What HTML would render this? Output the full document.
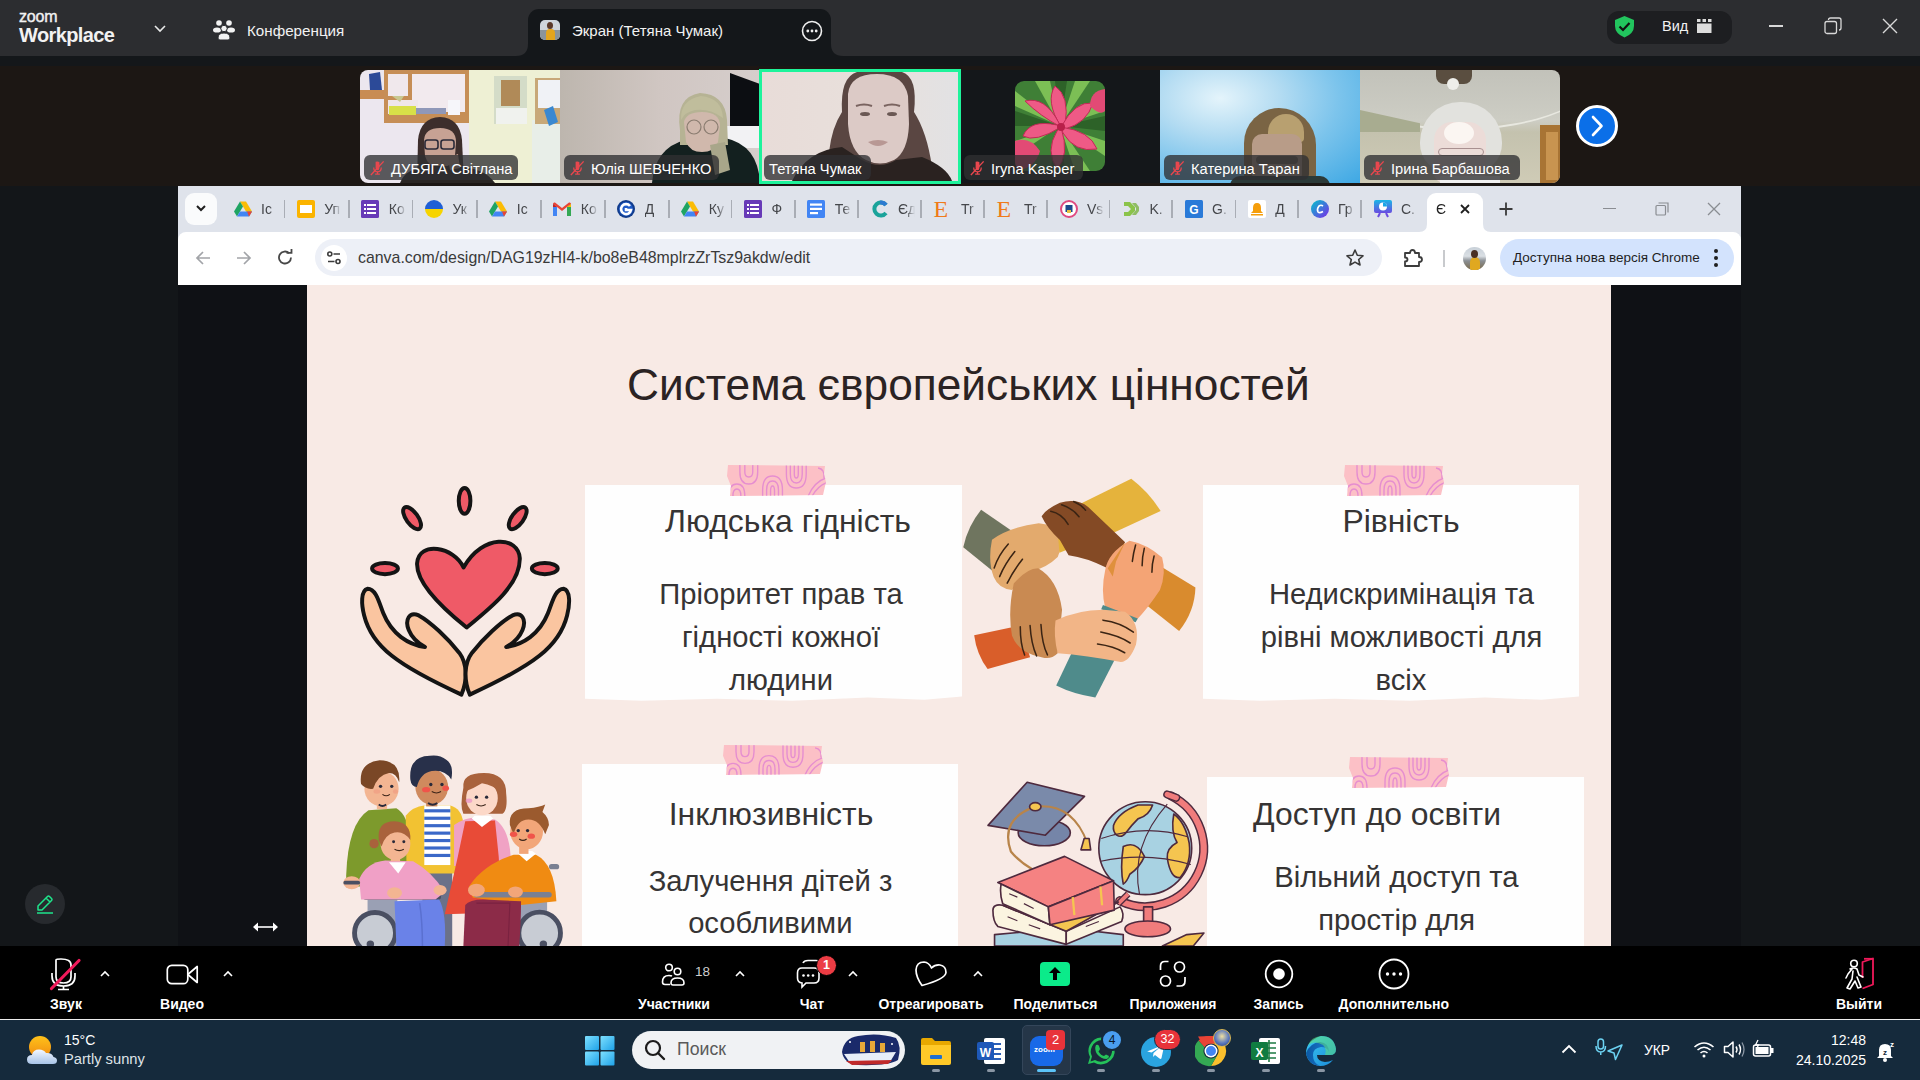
<!DOCTYPE html>
<html><head><meta charset="utf-8">
<style>
*{box-sizing:border-box;margin:0;padding:0}
html,body{width:1920px;height:1080px;overflow:hidden;background:#131619;font-family:"Liberation Sans",sans-serif;position:relative}
.a{position:absolute}
svg{display:block}
#title{left:0;top:0;width:1920px;height:56px;background:#2c2d30}
#strip{left:0;top:56px;width:1920px;height:10px;background:#14171a}
#gal{left:0;top:66px;width:1920px;height:120px;background:#1c1714}
#share{left:0;top:186px;width:1920px;height:760px;background:#131619}
#chrome{left:178px;top:186px;width:1563px;height:99px;background:#dfe3eb}
#cview{left:178px;top:285px;width:1563px;height:661px;background:#0f1115}
#slide{left:307px;top:285px;width:1304px;height:661px;background:#f8eae5;overflow:hidden}
#tb{left:0;top:946px;width:1920px;height:73px;background:#000}
#tline{left:0;top:1019px;width:1920px;height:1px;background:#ececec}
#task{left:0;top:1020px;width:1920px;height:60px;background:#152a3c}
.nm{position:absolute;height:25px;border-radius:6px;background:rgba(48,48,50,0.78);color:#fff;font-size:14.7px;line-height:28px;white-space:nowrap;overflow:hidden}
.tl{position:absolute;top:70px;height:113px;overflow:hidden}
.tt{font-size:14px;line-height:16px;color:#45474b;width:17px;overflow:hidden;white-space:nowrap;-webkit-mask-image:linear-gradient(90deg,#000 50%,transparent 100%)}
</style></head><body>
<div id="title" class="a"></div>
<div id="strip" class="a"></div>
<div id="gal" class="a"></div>
<div id="share" class="a"></div>
<div id="chrome" class="a"></div>
<div id="cview" class="a"></div>
<div id="tb" class="a"></div>
<div id="tline" class="a"></div>
<div id="task" class="a"></div>

<!-- TITLE BAR -->
<div class="a" style="left:19px;top:9px;font-size:16px;color:#f2f2f2;letter-spacing:-0.2px;line-height:1;-webkit-text-stroke:0.4px #f2f2f2">zoom</div>
<div class="a" style="left:19px;top:25px;font-size:20px;font-weight:bold;color:#f2f2f2;line-height:1;letter-spacing:-0.6px">Workplace</div>
<svg class="a" style="left:153px;top:24px" width="14" height="10" viewBox="0 0 14 10"><path d="M2 2 L7 7 L12 2" stroke="#e8e8e8" stroke-width="1.6" fill="none"/></svg>
<svg class="a" style="left:213px;top:19px" width="23" height="22" viewBox="0 0 23 22">
<circle cx="6" cy="4" r="2.8" fill="#f2f2f2"/><circle cx="16" cy="4" r="2.8" fill="#f2f2f2"/>
<ellipse cx="4" cy="11" rx="4" ry="2.6" fill="#f2f2f2"/><ellipse cx="18" cy="11" rx="4" ry="2.6" fill="#f2f2f2"/>
<circle cx="11" cy="9.5" r="3.2" fill="#f2f2f2" stroke="#2c2d30" stroke-width="1"/>
<path d="M5 19 Q5 14 11 14 Q17 14 17 19 Q17 21 15 21 L7 21 Q5 21 5 19Z" fill="#f2f2f2" stroke="#2c2d30" stroke-width="1"/>
</svg>
<div class="a" style="left:247px;top:23px;font-size:15.2px;color:#f2f2f2;line-height:1">Конференция</div>
<!-- active tab -->
<div class="a" style="left:528px;top:9px;width:303px;height:47px;background:#14171a;border-radius:11px 11px 0 0"></div>
<svg class="a" style="left:516px;top:44px" width="12" height="12"><path d="M0 12 Q12 12 12 0 L12 12Z" fill="#14171a"/></svg>
<svg class="a" style="left:831px;top:44px" width="12" height="12"><path d="M12 12 Q0 12 0 0 L0 12Z" fill="#14171a"/></svg>
<div class="a" style="left:540px;top:20px;width:20px;height:20px;border-radius:5px;overflow:hidden;background:#cfd6dc">
  <div class="a" style="left:0;top:10px;width:20px;height:10px;background:#8a949a"></div>
  <div class="a" style="left:6px;top:9px;width:9px;height:11px;border-radius:4px 4px 0 0;background:#e3a51d"></div>
  <div class="a" style="left:7px;top:2px;width:6px;height:7px;border-radius:50%;background:#5a3a2a"></div>
</div>
<div class="a" style="left:572px;top:23px;font-size:15px;color:#f2f2f2;line-height:1">Экран (Тетяна Чумак)</div>
<svg class="a" style="left:801px;top:20px" width="22" height="22" viewBox="0 0 22 22"><circle cx="11" cy="11" r="9.5" stroke="#f0f0f0" stroke-width="1.6" fill="none"/><circle cx="6.8" cy="11" r="1.4" fill="#f0f0f0"/><circle cx="11" cy="11" r="1.4" fill="#f0f0f0"/><circle cx="15.2" cy="11" r="1.4" fill="#f0f0f0"/></svg>
<!-- right -->
<div class="a" style="left:1607px;top:11px;width:125px;height:33px;background:#1d1e21;border-radius:12px"></div>
<svg class="a" style="left:1614px;top:15px" width="21" height="23" viewBox="0 0 21 23"><path d="M10.5 1 L20 5 L20 11 Q20 18.5 10.5 22.5 Q1 18.5 1 11 L1 5Z" fill="#22c55e"/><path d="M5.5 11.5 L9 15 L15.5 8" stroke="#111" stroke-width="2.2" fill="none"/></svg>
<div class="a" style="left:1662px;top:19px;font-size:14.5px;color:#f2f2f2;line-height:1">Вид</div>
<svg class="a" style="left:1697px;top:19px" width="15" height="15" viewBox="0 0 15 15"><rect x="0" y="0" width="3.5" height="3" fill="#ddd"/><rect x="5.5" y="0" width="3.5" height="3" fill="#ddd"/><rect x="11" y="0" width="3.5" height="3" fill="#ddd"/><rect x="0" y="4.5" width="14.5" height="9.5" fill="#ddd"/></svg>
<div class="a" style="left:1769px;top:25px;width:14px;height:1.5px;background:#d8d8d8"></div>
<svg class="a" style="left:1824px;top:17px" width="18" height="18" viewBox="0 0 18 18"><rect x="1" y="4.5" width="11.5" height="12" rx="2" stroke="#d8d8d8" stroke-width="1.3" fill="none"/><path d="M4.5 3 Q4.5 1 6.5 1 L15 1 Q17 1 17 3 L17 11 Q17 13 15 13" stroke="#d8d8d8" stroke-width="1.3" fill="none"/></svg>
<svg class="a" style="left:1882px;top:18px" width="16" height="16" viewBox="0 0 16 16"><path d="M1 1 L15 15 M15 1 L1 15" stroke="#d8d8d8" stroke-width="1.4"/></svg>

<!-- GALLERY -->
<svg width="0" height="0" style="position:absolute"><defs>
<symbol id="mmic" viewBox="0 0 18 16"><path d="M7 1.5 Q9.5 0.5 11 2 L11 8 Q11 10.5 9 10.5 Q7 10.5 7 8Z" fill="#e8474e"/><path d="M5 7.5 Q5 12 9 12 Q13 12 13 7.5" stroke="#e8474e" stroke-width="1.3" fill="none"/><path d="M9 12 L9 14.5 M6.5 14.5 L11.5 14.5" stroke="#e8474e" stroke-width="1.3"/><path d="M2 15.5 L15.5 1" stroke="#e8474e" stroke-width="1.5"/></symbol>
</defs></svg>
<!-- tile 1 -->
<div class="tl" style="left:360px;width:200px;border-radius:8px 0 0 8px">
<svg class="a" style="left:0;top:0;filter:blur(0.5px)" width="200" height="113" viewBox="0 0 200 113">
<rect x="0" y="0" width="110" height="113" fill="#ece7ef"/>
<rect x="109" y="0" width="91" height="113" fill="#eef0d4"/>
<rect x="172" y="50" width="28" height="63" fill="#e8eee8"/>
<rect x="0" y="20" width="27" height="9" fill="#c88c54"/>
<path d="M9 4 L20 2 L22 20 L10 20Z" fill="#2c4a98"/>
<rect x="24" y="0" width="85" height="53" fill="#c68e56"/>
<rect x="28" y="4" width="20" height="22" fill="#f0e8ec"/>
<rect x="52" y="4" width="53" height="38" fill="#f2eaee"/>
<rect x="28" y="30" width="30" height="14" fill="#efe6ea"/>
<rect x="29" y="36" width="27" height="9" fill="#d8e048"/>
<rect x="56" y="38" width="30" height="6" fill="#9098b8"/>
<rect x="88" y="30" width="12" height="15" fill="#f6f6fa"/>
<path d="M32 26 L44 26 L40 32Z" fill="#c8c890"/>
<rect x="28" y="45" width="77" height="5" fill="#c68e56"/>
<rect x="134" y="6" width="33" height="48" fill="#d4dcc8"/>
<rect x="141" y="10" width="19" height="26" fill="#b08a58"/>
<rect x="136" y="38" width="31" height="16" fill="#f0f2ee"/>
<rect x="175" y="8" width="25" height="46" fill="#c8a878"/>
<rect x="178" y="10" width="22" height="28" fill="#f0f2f6"/>
<path d="M184 40 L193 36 L198 52 L189 56Z" fill="#3a88d0"/>
<path d="M57 113 L58 70 Q60 48 80 47 Q100 48 102 70 L104 113Z" fill="#3d2e2c"/>
<path d="M64 70 Q65 58 80 58 Q96 58 96 72 L95 86 Q92 97 80 98 Q68 97 65 86Z" fill="#c7a294"/>
<g stroke="#2a2a38" stroke-width="1.6" fill="none"><rect x="65" y="70" width="13" height="9" rx="2.5"/><rect x="81" y="70" width="13" height="9" rx="2.5"/></g>
<path d="M40 113 Q45 98 70 96 L95 96 Q125 98 135 113Z" fill="#2a2624"/>
<path d="M88 88 L98 84 L100 98 L90 100Z" fill="#c7a294"/>
</svg></div>
<!-- tile 2 -->
<div class="tl" style="left:560px;width:200px">
<svg class="a" style="left:0;top:0;filter:blur(0.5px)" width="200" height="113" viewBox="0 0 200 113">
<defs><linearGradient id="t2bg" x1="0" y1="0" x2="1" y2="0"><stop offset="0" stop-color="#bdb6ae"/><stop offset="0.5" stop-color="#d0c6c2"/><stop offset="1" stop-color="#d6cecc"/></linearGradient></defs>
<rect x="0" y="0" width="200" height="113" fill="url(#t2bg)"/>
<path d="M170 3 L200 14 L200 58 L170 57Z" fill="#0c0e12"/>
<rect x="160" y="56" width="40" height="22" fill="#f2f2f4"/>
<path d="M92 113 Q95 78 125 70 L165 68 Q198 75 200 113Z" fill="#13201f"/>
<path d="M120 60 Q115 27 140 23 Q165 24 167 50 L168 75 L120 75Z" fill="#b6b394"/>
<path d="M124 52 Q126 42 142 42 Q160 42 160 56 L158 72 Q154 82 142 82 Q130 82 126 72Z" fill="#d0b8ac"/>
<path d="M121 50 Q120 30 141 26 Q162 28 163 48 Q150 38 135 40 Q125 42 121 50Z" fill="#c0bd9c"/>
<g stroke="#8a7c70" stroke-width="1.2" fill="none"><circle cx="134" cy="57" r="7"/><circle cx="151" cy="57" r="7"/></g>
<path d="M150 75 L165 72 L170 100 L155 105Z" fill="#a8a68a"/>
</svg></div>
<!-- tile 3 -->
<div class="tl" style="left:759px;top:69px;width:202px;height:115px;border:3px solid #1ef39b">
<svg class="a" style="left:0;top:0;filter:blur(0.5px)" width="196" height="109" viewBox="0 0 196 109">
<defs><linearGradient id="t3bg" x1="0" y1="0" x2="1" y2="0"><stop offset="0" stop-color="#e8dcd8"/><stop offset="0.6" stop-color="#e8e0dc"/><stop offset="1" stop-color="#e2e2e4"/></linearGradient></defs>
<rect x="0" y="0" width="196" height="109" fill="url(#t3bg)"/>
<path d="M67 80 Q70 55 80 40 Q78 5 95 0 L140 0 Q156 5 152 40 Q165 60 170 95 L130 100 L100 100Z" fill="#5a4642"/>
<path d="M86 22 Q88 2 115 2 Q142 2 146 24 L147 52 Q146 80 132 88 Q118 95 104 88 Q88 80 86 52Z" fill="#dccac6"/>
<path d="M94 34 Q102 31 110 34 M122 34 Q130 31 138 34" stroke="#7a6460" stroke-width="2" fill="none"/><ellipse cx="103" cy="42" rx="5" ry="2" fill="#6a5854"/><ellipse cx="130" cy="42" rx="5" ry="2" fill="#6a5854"/>
<path d="M106 70 Q116 66 126 70 Q116 78 106 70Z" fill="#b89894"/>
<path d="M30 109 Q45 78 80 75 L100 88 Q118 98 134 88 L160 85 Q185 95 190 109Z" fill="#2a2220"/>
</svg></div>
<!-- tile 4 -->
<div class="tl" style="left:961px;width:199px;background:#14171a">
  <svg class="a" style="left:54px;top:11px" width="90" height="90" viewBox="0 0 90 90">
  <defs><clipPath id="avc"><rect x="0" y="0" width="90" height="90" rx="9"/></clipPath></defs>
  <g clip-path="url(#avc)">
  <rect x="0" y="0" width="90" height="90" fill="#3f7f36"/>
  <g fill="#7cbf55"><path d="M45 45 L0 10 L0 25Z"/><path d="M45 45 L20 0 L35 0Z"/><path d="M45 45 L60 0 L75 0Z"/><path d="M45 45 L90 15 L90 30Z"/><path d="M45 45 L90 60 L90 75Z"/><path d="M45 45 L60 90 L75 90Z"/><path d="M45 45 L0 60 L0 75Z"/></g>
  <g fill="#2d6228"><path d="M45 45 L0 30 L0 45Z"/><path d="M45 45 L40 0 L52 0Z"/><path d="M45 45 L90 35 L90 50Z"/><path d="M45 45 L35 90 L50 90Z"/></g>
  <g fill="#ee5a86" stroke="#c02a55" stroke-width="1">
  <path d="M46 46 Q30 20 40 5 Q55 15 50 44Z"/>
  <path d="M46 46 Q60 20 78 22 Q72 42 50 48Z"/>
  <path d="M46 46 Q75 50 82 68 Q60 72 48 52Z"/>
  <path d="M46 46 Q55 75 42 88 Q30 70 42 50Z"/>
  <path d="M46 46 Q20 62 8 55 Q15 38 42 44Z"/>
  <path d="M46 46 Q25 35 10 20 Q30 15 44 42Z"/>
  </g>
  <circle cx="46" cy="46" r="4" fill="#b8204a"/>
  <path d="M0 60 Q15 55 25 70 Q20 88 0 90Z" fill="#e24a75"/>
  <path d="M90 8 Q75 10 75 25 Q85 35 90 30Z" fill="#e24a75"/>
  </g></svg>
</div>
<!-- tile 5 -->
<div class="tl" style="left:1160px;width:200px;background:radial-gradient(ellipse at 30% 25%,#e4f4fb 0,#b4dcf2 30%,#7cc4ec 60%,#3ea8e4 100%)">
  <div class="a" style="left:84px;top:38px;width:72px;height:95px;border-radius:36px 38px 8px 8px;background:#7a6444"></div>
  <div class="a" style="left:108px;top:44px;width:36px;height:28px;border-radius:18px 18px 4px 4px;background:#b8a070"></div>
  <div class="a" style="left:92px;top:64px;width:50px;height:55px;border-radius:10px 10px 16px 16px;background:#b89c88"></div>
  <div class="a" style="left:96px;top:86px;width:42px;height:8px;border-radius:4px;background:#6a5a50"></div>
  <div class="a" style="left:70px;top:106px;width:100px;height:10px;background:#2c3a38;border-radius:10px 10px 0 0"></div>
</div>
<!-- tile 6 -->
<div class="tl" style="left:1360px;width:200px;border-radius:0 8px 8px 0;background:linear-gradient(180deg,#c2c2ba 0,#cdcdc4 45%,#c4c2ae 55%,#cfcbb6 100%)">
  <div class="a" style="left:-40px;top:-60px;width:280px;height:120px;border-radius:50%;border-bottom:2px solid #e8e8e0"></div>
  <div class="a" style="left:0;top:40px;width:60px;height:22px;background:#a8ac90;clip-path:polygon(0 0,100% 60%,100% 100%,0 100%)"></div>
  <div class="a" style="left:76px;top:0;width:36px;height:14px;background:#5a4e40;border-radius:0 0 8px 8px"></div>
  <div class="a" style="left:87px;top:8px;width:12px;height:12px;border-radius:50%;background:#eeeeea"></div>
  <div class="a" style="left:180px;top:55px;width:20px;height:58px;background:#a87434"></div>
  <div class="a" style="left:186px;top:62px;width:12px;height:48px;background:#c89450"></div>
  <div class="a" style="left:60px;top:32px;width:82px;height:70px;border-radius:40px 40px 28px 28px;background:#e2e2de"></div>
  <div class="a" style="left:74px;top:52px;width:52px;height:61px;border-radius:18px 18px 10px 10px;background:#ecdcd8"></div>
  <div class="a" style="left:84px;top:52px;width:30px;height:22px;border-radius:50%;background:#fbf6f2"></div>
  <div class="a" style="left:78px;top:78px;width:46px;height:8px;border-radius:4px;border:1px solid #a89090"></div>
  <div class="a" style="left:80px;top:106px;width:60px;height:7px;background:#f0f0f0"></div>
</div>
<!-- name labels -->
<div class="nm" style="left:364px;top:155px;width:154px;padding-left:27px">ДУБЯГА Світлана<svg class="a" style="left:5px;top:5px" width="17" height="16"><use href="#mmic"/></svg></div>
<div class="nm" style="left:564px;top:155px;width:155px;padding-left:27px">Юлія ШЕВЧЕНКО<svg class="a" style="left:5px;top:5px" width="17" height="16"><use href="#mmic"/></svg></div>
<div class="nm" style="left:764px;top:155px;width:107px;padding-left:5px">Тетяна Чумак</div>
<div class="nm" style="left:964px;top:155px;width:119px;padding-left:27px">Iryna Kasper<svg class="a" style="left:5px;top:5px" width="17" height="16"><use href="#mmic"/></svg></div>
<div class="nm" style="left:1164px;top:155px;width:145px;padding-left:27px">Катерина Таран<svg class="a" style="left:5px;top:5px" width="17" height="16"><use href="#mmic"/></svg></div>
<div class="nm" style="left:1364px;top:155px;width:156px;padding-left:27px">Ірина Барбашова<svg class="a" style="left:5px;top:5px" width="17" height="16"><use href="#mmic"/></svg></div>
<!-- next btn -->
<svg class="a" style="left:1576px;top:105px" width="42" height="42" viewBox="0 0 42 42"><circle cx="21" cy="21" r="19.5" fill="#0b6fe8" stroke="#fff" stroke-width="3"/><path d="M17 12 L25.5 21 L17 30" stroke="#fff" stroke-width="2.6" fill="none" stroke-linecap="round" stroke-linejoin="round"/></svg>

<!-- CHROME -->
<div class="a" style="left:185px;top:193px;width:32px;height:32px;border-radius:9px;background:#fafbfc"></div>
<svg class="a" style="left:195px;top:203px" width="12" height="10" viewBox="0 0 12 10"><path d="M2 3 L6 7 L10 3" stroke="#1f1f1f" stroke-width="2" fill="none"/></svg>
<div class="a" style="left:233.5px;top:201px"><svg width="18" height="16" viewBox="0 0 18 16"><path d="M6 0.5 L12 0.5 L18 10.5 L15 15.5 Z" fill="#fbbc04"/><path d="M6 0.5 L0 10.5 L3 15.5 L9 5.5Z" fill="#1fa463"/><path d="M3 15.5 L15 15.5 L18 10.5 L6 10.5Z" fill="#4285f4"/><path d="M15 15.5 L18 10.5 L13 10.5Z" fill="#ea4335"/></svg></div>
<div class="a tt" style="left:261.0px;top:201px">Іс</div>
<div class="a" style="left:296.8px;top:200px"><svg width="18" height="18" viewBox="0 0 18 18"><rect x="0" y="0" width="18" height="18" rx="2" fill="#fbb400"/><rect x="3" y="5" width="12" height="8" fill="#fff"/></svg></div>
<div class="a tt" style="left:324.2px;top:201px">Уп</div>
<div class="a" style="left:361.2px;top:200px"><svg width="18" height="18" viewBox="0 0 18 18"><rect x="0" y="0" width="18" height="18" rx="1.5" fill="#673ab7"/><rect x="3" y="4" width="2" height="2" fill="#fff"/><rect x="6" y="4" width="9" height="2" fill="#fff"/><rect x="3" y="8" width="2" height="2" fill="#fff"/><rect x="6" y="8" width="9" height="2" fill="#fff"/><rect x="3" y="12" width="2" height="2" fill="#fff"/><rect x="6" y="12" width="9" height="2" fill="#fff"/></svg></div>
<div class="a tt" style="left:388.8px;top:201px">Ко</div>
<div class="a" style="left:425.0px;top:200px"><svg width="18" height="18" viewBox="0 0 18 18"><path d="M0 9 A9 9 0 0 1 18 9Z" fill="#1f5fd6"/><path d="M0 9 A9 9 0 0 0 18 9Z" fill="#f6d400"/></svg></div>
<div class="a tt" style="left:452.5px;top:201px">Ук</div>
<div class="a" style="left:489.2px;top:201px"><svg width="18" height="16" viewBox="0 0 18 16"><path d="M6 0.5 L12 0.5 L18 10.5 L15 15.5 Z" fill="#fbbc04"/><path d="M6 0.5 L0 10.5 L3 15.5 L9 5.5Z" fill="#1fa463"/><path d="M3 15.5 L15 15.5 L18 10.5 L6 10.5Z" fill="#4285f4"/><path d="M15 15.5 L18 10.5 L13 10.5Z" fill="#ea4335"/></svg></div>
<div class="a tt" style="left:516.8px;top:201px">Іс</div>
<div class="a" style="left:553.2px;top:202px"><svg width="18" height="14" viewBox="0 0 18 14"><path d="M0 2 L0 14 L4 14 L4 5Z" fill="#4285f4"/><path d="M18 2 L18 14 L14 14 L14 5Z" fill="#34a853"/><path d="M0 2 Q0 0 2 0.5 L9 6 L16 0.5 Q18 0 18 2 L14 5 L9 9 L4 5Z" fill="#ea4335"/><path d="M14 5 L18 2 L18 5Z" fill="#fbbc04"/><path d="M0 2 L4 5 L0 5Z" fill="#c5221f"/></svg></div>
<div class="a tt" style="left:580.8px;top:201px">Ко</div>
<div class="a" style="left:617.2px;top:200px"><svg width="18" height="18" viewBox="0 0 18 18"><circle cx="9" cy="9" r="9" fill="#123c8c"/><circle cx="9" cy="9" r="7" fill="#1f5bc8"/><path d="M13 6 A5 5 0 1 0 14 10 L9 10 L9 8" stroke="#fff" stroke-width="2.6" fill="none"/></svg></div>
<div class="a tt" style="left:644.8px;top:201px">Д</div>
<div class="a" style="left:681.2px;top:201px"><svg width="18" height="16" viewBox="0 0 18 16"><path d="M6 0.5 L12 0.5 L18 10.5 L15 15.5 Z" fill="#fbbc04"/><path d="M6 0.5 L0 10.5 L3 15.5 L9 5.5Z" fill="#1fa463"/><path d="M3 15.5 L15 15.5 L18 10.5 L6 10.5Z" fill="#4285f4"/><path d="M15 15.5 L18 10.5 L13 10.5Z" fill="#ea4335"/></svg></div>
<div class="a tt" style="left:708.8px;top:201px">Ку</div>
<div class="a" style="left:744.1px;top:200px"><svg width="18" height="18" viewBox="0 0 18 18"><rect x="0" y="0" width="18" height="18" rx="1.5" fill="#673ab7"/><rect x="3" y="4" width="2" height="2" fill="#fff"/><rect x="6" y="4" width="9" height="2" fill="#fff"/><rect x="3" y="8" width="2" height="2" fill="#fff"/><rect x="6" y="8" width="9" height="2" fill="#fff"/><rect x="3" y="12" width="2" height="2" fill="#fff"/><rect x="6" y="12" width="9" height="2" fill="#fff"/></svg></div>
<div class="a tt" style="left:771.6px;top:201px">Ф</div>
<div class="a" style="left:807.2px;top:200px"><svg width="18" height="18" viewBox="0 0 18 18"><rect x="0" y="0" width="18" height="18" rx="1.5" fill="#4285f4"/><rect x="3" y="3.5" width="12" height="2.2" fill="#fff"/><rect x="3" y="7.8" width="12" height="2.2" fill="#fff"/><rect x="3" y="12" width="8" height="2.2" fill="#fff"/></svg></div>
<div class="a tt" style="left:834.8px;top:201px">Те</div>
<div class="a" style="left:870.5px;top:200px"><svg width="18" height="18" viewBox="0 0 18 18"><path d="M15 5 A6.5 6.5 0 1 0 15 13" stroke="#1aa39a" stroke-width="4" fill="none"/><path d="M15 5 A6.5 6.5 0 0 0 9 2.5" stroke="#2c7ad0" stroke-width="4" fill="none"/></svg></div>
<div class="a tt" style="left:898.0px;top:201px">Єд</div>
<div class="a" style="left:933.5px;top:200px"><div style="font-family:'Liberation Serif',serif;font-size:24px;line-height:18px;color:#f07a1a;font-weight:normal">E</div></div>
<div class="a tt" style="left:961.0px;top:201px">Tr</div>
<div class="a" style="left:996.5px;top:200px"><div style="font-family:'Liberation Serif',serif;font-size:24px;line-height:18px;color:#f07a1a;font-weight:normal">E</div></div>
<div class="a tt" style="left:1024.0px;top:201px">Tr</div>
<div class="a" style="left:1059.5px;top:200px"><svg width="18" height="18" viewBox="0 0 18 18"><circle cx="9" cy="9" r="8" stroke="#e04a80" stroke-width="2" fill="#fff"/><rect x="5.5" y="5" width="7" height="7" fill="#1c4a8c"/><rect x="7" y="10" width="4" height="3" fill="#e8c040"/></svg></div>
<div class="a tt" style="left:1087.0px;top:201px">Vs</div>
<div class="a" style="left:1122.0px;top:200px"><svg width="18" height="18" viewBox="0 0 18 18"><path d="M2 2 L8 2 L13 7 L13 11 L8 16 L2 16 L2 12 L6 12 L9 9 L6 6 L2 6Z" fill="#8bc34a"/><path d="M10 3 L14 3 L17 7 L17 11 L14 15 L10 15 L14 10 L14 8Z" fill="#7cb342" opacity="0.8"/></svg></div>
<div class="a tt" style="left:1149.5px;top:201px">K.</div>
<div class="a" style="left:1184.5px;top:200px"><svg width="18" height="18" viewBox="0 0 18 18"><rect x="0" y="0" width="18" height="18" rx="1.5" fill="#2a7ad8"/><text x="9" y="13.5" font-family="Liberation Sans" font-weight="bold" font-size="12" fill="#fff" text-anchor="middle">G</text></svg></div>
<div class="a tt" style="left:1212.0px;top:201px">G.</div>
<div class="a" style="left:1247.8px;top:200px"><svg width="18" height="18" viewBox="0 0 18 18"><rect x="0" y="0" width="18" height="18" rx="2" fill="#fff"/><path d="M9 3 Q13 3 13 8 L13 11 L15 13 L3 13 L5 11 L5 8 Q5 3 9 3Z" fill="#f59e0b"/><rect x="3" y="14" width="12" height="1.5" fill="#f59e0b"/></svg></div>
<div class="a tt" style="left:1275.3px;top:201px">Д</div>
<div class="a" style="left:1310.5px;top:200px"><svg width="18" height="18" viewBox="0 0 18 18"><defs><linearGradient id="cg" x1="0" y1="0" x2="1" y2="1"><stop offset="0" stop-color="#00c4cc"/><stop offset="1" stop-color="#7d2ae8"/></linearGradient></defs><circle cx="9" cy="9" r="9" fill="url(#cg)"/><path d="M12 6 Q10 4.5 8 6 Q5.5 9 7 12 Q8.5 13.5 12 11.5" stroke="#fff" stroke-width="1.6" fill="none"/></svg></div>
<div class="a tt" style="left:1338.0px;top:201px">Гр</div>
<div class="a" style="left:1373.5px;top:200px"><svg width="18" height="18" viewBox="0 0 18 18"><defs><linearGradient id="pg" x1="0" y1="0" x2="0" y2="1"><stop offset="0" stop-color="#19b6e6"/><stop offset="1" stop-color="#6a4ce0"/></linearGradient></defs><rect x="0" y="0" width="18" height="13" rx="2" fill="url(#pg)"/><path d="M6 13 L4 17 M12 13 L14 17" stroke="#6a4ce0" stroke-width="2"/><circle cx="9" cy="6.5" r="4" fill="#fff"/><path d="M9 6.5 L9 2.5 A4 4 0 0 1 13 6.5Z" fill="#19a6e6"/></svg></div>
<div class="a tt" style="left:1401.0px;top:201px">С.</div>
<div class="a" style="left:283.50px;top:200px;width:1.5px;height:18px;background:#a9adb5"></div>
<div class="a" style="left:348.00px;top:200px;width:1.5px;height:18px;background:#a9adb5"></div>
<div class="a" style="left:411.75px;top:200px;width:1.5px;height:18px;background:#a9adb5"></div>
<div class="a" style="left:476.00px;top:200px;width:1.5px;height:18px;background:#a9adb5"></div>
<div class="a" style="left:540.00px;top:200px;width:1.5px;height:18px;background:#a9adb5"></div>
<div class="a" style="left:604.00px;top:200px;width:1.5px;height:18px;background:#a9adb5"></div>
<div class="a" style="left:668.00px;top:200px;width:1.5px;height:18px;background:#a9adb5"></div>
<div class="a" style="left:730.85px;top:200px;width:1.5px;height:18px;background:#a9adb5"></div>
<div class="a" style="left:794.00px;top:200px;width:1.5px;height:18px;background:#a9adb5"></div>
<div class="a" style="left:857.25px;top:200px;width:1.5px;height:18px;background:#a9adb5"></div>
<div class="a" style="left:920.25px;top:200px;width:1.5px;height:18px;background:#a9adb5"></div>
<div class="a" style="left:983.25px;top:200px;width:1.5px;height:18px;background:#a9adb5"></div>
<div class="a" style="left:1046.25px;top:200px;width:1.5px;height:18px;background:#a9adb5"></div>
<div class="a" style="left:1108.75px;top:200px;width:1.5px;height:18px;background:#a9adb5"></div>
<div class="a" style="left:1171.25px;top:200px;width:1.5px;height:18px;background:#a9adb5"></div>
<div class="a" style="left:1234.55px;top:200px;width:1.5px;height:18px;background:#a9adb5"></div>
<div class="a" style="left:1297.25px;top:200px;width:1.5px;height:18px;background:#a9adb5"></div>
<div class="a" style="left:1360.25px;top:200px;width:1.5px;height:18px;background:#a9adb5"></div>
<div class="a" style="left:1427px;top:193px;width:56px;height:40px;background:#fff;border-radius:9px 9px 0 0"></div>
<svg class="a" style="left:1419px;top:224px" width="8" height="8"><path d="M0 8 Q8 8 8 0 L8 8Z" fill="#fff"/></svg>
<svg class="a" style="left:1483px;top:224px" width="8" height="8"><path d="M8 8 Q0 8 0 0 L0 8Z" fill="#fff"/></svg>
<div class="a tt" style="left:1436px;top:201px;color:#1f1f1f">Є</div>
<svg class="a" style="left:1459px;top:203px" width="12" height="12" viewBox="0 0 12 12"><path d="M2 2 L10 10 M10 2 L2 10" stroke="#1f1f1f" stroke-width="1.8"/></svg>
<svg class="a" style="left:1498px;top:201px" width="16" height="16" viewBox="0 0 16 16"><path d="M8 1.5 L8 14.5 M1.5 8 L14.5 8" stroke="#3a3a3a" stroke-width="1.8"/></svg>
<div class="a" style="left:1603px;top:208px;width:13px;height:1.3px;background:#8a8d92"></div>
<svg class="a" style="left:1655px;top:202px" width="14" height="14" viewBox="0 0 14 14"><rect x="1" y="3.5" width="9.5" height="9.5" rx="1" stroke="#8a8d92" stroke-width="1.2" fill="none"/><path d="M3.5 1 L13 1 L13 10.5" stroke="#8a8d92" stroke-width="1.2" fill="none"/></svg>
<svg class="a" style="left:1707px;top:202px" width="14" height="14" viewBox="0 0 14 14"><path d="M1 1 L13 13 M13 1 L1 13" stroke="#8a8d92" stroke-width="1.3"/></svg>
<div class="a" style="left:178px;top:232px;width:1563px;height:53px;background:#fff;border-radius:8px 8px 0 0"></div>
<svg class="a" style="left:195px;top:250px" width="16" height="16" viewBox="0 0 16 16"><path d="M15 8 L2 8 M8 2 L2 8 L8 14" stroke="#a2a4a8" stroke-width="1.7" fill="none"/></svg>
<svg class="a" style="left:236px;top:250px" width="16" height="16" viewBox="0 0 16 16"><path d="M1 8 L14 8 M8 2 L14 8 L8 14" stroke="#a2a4a8" stroke-width="1.7" fill="none"/></svg>
<svg class="a" style="left:277px;top:249px" width="17" height="17" viewBox="0 0 17 17"><path d="M14 8.5 A6 6 0 1 1 12.2 4.2" stroke="#474747" stroke-width="1.8" fill="none"/><path d="M9.5 3.8 L14.5 3.8 L14.5 -1" stroke="#474747" stroke-width="1.8" fill="none"/></svg>
<div class="a" style="left:315px;top:239px;width:1067px;height:37px;border-radius:19px;background:#edf0f7"></div>
<div class="a" style="left:321px;top:245px;width:26px;height:26px;border-radius:13px;background:#fff"></div>
<svg class="a" style="left:326px;top:250px" width="16" height="16" viewBox="0 0 16 16"><circle cx="3.8" cy="4" r="2" stroke="#3c3c3c" stroke-width="1.6" fill="none"/><path d="M7.5 4 L14 4 M2 11.5 L8.5 11.5" stroke="#3c3c3c" stroke-width="1.6"/><circle cx="12" cy="11.5" r="2" stroke="#3c3c3c" stroke-width="1.6" fill="none"/></svg>
<div class="a" style="left:358px;top:249px;font-size:15.9px;line-height:18px;color:#3a3a3a;white-space:nowrap">canva.com/design/DAG19zHI4-k/bo8eB48mplrzZrTsz9akdw/edit</div>
<svg class="a" style="left:1345px;top:248px" width="20" height="20" viewBox="0 0 20 20"><path d="M10 2 L12.3 7.3 L18 7.8 L13.7 11.5 L15 17 L10 14.1 L5 17 L6.3 11.5 L2 7.8 L7.7 7.3Z" stroke="#3c3c3c" stroke-width="1.6" fill="none" stroke-linejoin="round"/></svg>
<svg class="a" style="left:1403px;top:248px" width="21" height="20" viewBox="0 0 21 20"><path d="M2 5 L7 5 Q7 2 9.5 2 Q12 2 12 5 L16 5 L16 9 Q19 9 19 11.5 Q19 14 16 14 L16 18 L2 18 L2 13.5 Q4.5 13.5 4.5 11.5 Q4.5 9.5 2 9.5Z" stroke="#3c3c3c" stroke-width="1.8" fill="none" stroke-linejoin="round"/></svg>
<div class="a" style="left:1443px;top:250px;width:1.5px;height:17px;background:#c8cacd"></div>
<div class="a" style="left:1463px;top:247px;width:23px;height:23px;border-radius:50%;overflow:hidden;background:linear-gradient(180deg,#c8d0d8 0,#dadfe4 40%,#8a8f94 60%,#7a6a4a 100%)"><div class="a" style="left:7px;top:10px;width:10px;height:13px;border-radius:5px 5px 0 0;background:#e0a820"></div><div class="a" style="left:8px;top:3px;width:7px;height:8px;border-radius:50%;background:#4a3024"></div></div>
<div class="a" style="left:1500px;top:239px;width:234px;height:38px;border-radius:19px;background:#d3e3fd"></div>
<div class="a" style="left:1513px;top:250px;font-size:13.5px;line-height:16px;color:#1f1f1f;white-space:nowrap">Доступна нова версія Chrome</div>
<svg class="a" style="left:1712px;top:248px" width="8" height="20" viewBox="0 0 8 20"><circle cx="4" cy="3" r="2" fill="#1f1f1f"/><circle cx="4" cy="10" r="2" fill="#1f1f1f"/><circle cx="4" cy="17" r="2" fill="#1f1f1f"/></svg>
<!-- SLIDE -->
<div class="a" style="left:307px;top:285px;width:1304px;height:661px;overflow:hidden;background:#f8eae5"><div class="a" style="left:-307px;top:-285px;width:1920px;height:1080px">
<div class="a" style="left:618.3px;top:362.55px;width:700px;text-align:center;font-size:44.25px;line-height:1;color:#2b2323;white-space:nowrap;">Система європейських цінностей</div>
<div class="a" style="left:585px;top:485px;width:377px;height:218px;background:#fefefe;clip-path:polygon(0 0,100% 0,100% 97%,90% 98.5%,75% 97.5%,55% 99%,35% 98%,15% 99%,0 98%)"></div>
<div class="a" style="left:1203px;top:485px;width:376px;height:218px;background:#fefefe;clip-path:polygon(0 0,100% 0,100% 97%,90% 98.5%,75% 97.5%,55% 99%,35% 98%,15% 99%,0 98%)"></div>
<div class="a" style="left:582px;top:764px;width:376px;height:200px;background:#fefefe;clip-path:polygon(0 0,100% 0,100% 97%,90% 98.5%,75% 97.5%,55% 99%,35% 98%,15% 99%,0 98%)"></div>
<div class="a" style="left:1207px;top:777px;width:377px;height:200px;background:#fefefe;clip-path:polygon(0 0,100% 0,100% 97%,90% 98.5%,75% 97.5%,55% 99%,35% 98%,15% 99%,0 98%)"></div>
<svg class="a" style="left:727px;top:464px" width="99" height="32" viewBox="0 0 100 32" preserveAspectRatio="none"><defs><clipPath id="tp1"><path d="M1 1 L99 2 L98 10 L100 18 L97 31 L3 32 L4 22 L0 12Z"/></clipPath></defs><path d="M1 1 L99 2 L98 10 L100 18 L97 31 L3 32 L4 22 L0 12Z" fill="#fcc0c6"/><g stroke="#e68ed0" stroke-width="1.4" fill="none" clip-path="url(#tp1)"><path d="M2 32 Q2 20 10 20 Q18 20 18 32"/><path d="M6 32 Q6 25 10 25 Q14 25 14 32"/><path d="M13 0 L13 8 Q13 20 22 20 Q31 20 31 8 L31 0"/><path d="M18 0 L18 8 Q18 13 22 13 Q26 13 26 8 L26 0"/><path d="M36 32 L36 26 Q36 12 46 12 Q56 12 56 26 L56 32"/><path d="M40 32 L40 26 Q40 17 46 17 Q52 17 52 26 L52 32"/><path d="M44 32 L44 27 Q44 22 46 22 Q48 22 48 27 L48 32"/><path d="M60 0 L60 10 Q60 24 70 24 Q80 24 80 10 L80 0"/><path d="M64 0 L64 10 Q64 19 70 19 Q76 19 76 10 L76 0"/><path d="M68 0 L68 10 Q68 14 70 14 Q72 14 72 10 L72 0"/><path d="M82 32 Q88 18 100 14"/><path d="M86 32 Q92 22 100 19"/><path d="M92 4 Q99 5 98 14"/></g></svg>
<svg class="a" style="left:1344px;top:464px" width="100" height="32" viewBox="0 0 100 32" preserveAspectRatio="none"><defs><clipPath id="tp2"><path d="M1 1 L99 2 L98 10 L100 18 L97 31 L3 32 L4 22 L0 12Z"/></clipPath></defs><path d="M1 1 L99 2 L98 10 L100 18 L97 31 L3 32 L4 22 L0 12Z" fill="#fcc0c6"/><g stroke="#e68ed0" stroke-width="1.4" fill="none" clip-path="url(#tp2)"><path d="M2 32 Q2 20 10 20 Q18 20 18 32"/><path d="M6 32 Q6 25 10 25 Q14 25 14 32"/><path d="M13 0 L13 8 Q13 20 22 20 Q31 20 31 8 L31 0"/><path d="M18 0 L18 8 Q18 13 22 13 Q26 13 26 8 L26 0"/><path d="M36 32 L36 26 Q36 12 46 12 Q56 12 56 26 L56 32"/><path d="M40 32 L40 26 Q40 17 46 17 Q52 17 52 26 L52 32"/><path d="M44 32 L44 27 Q44 22 46 22 Q48 22 48 27 L48 32"/><path d="M60 0 L60 10 Q60 24 70 24 Q80 24 80 10 L80 0"/><path d="M64 0 L64 10 Q64 19 70 19 Q76 19 76 10 L76 0"/><path d="M68 0 L68 10 Q68 14 70 14 Q72 14 72 10 L72 0"/><path d="M82 32 Q88 18 100 14"/><path d="M86 32 Q92 22 100 19"/><path d="M92 4 Q99 5 98 14"/></g></svg>
<svg class="a" style="left:723px;top:744px" width="100" height="31" viewBox="0 0 100 32" preserveAspectRatio="none"><defs><clipPath id="tp3"><path d="M1 1 L99 2 L98 10 L100 18 L97 31 L3 32 L4 22 L0 12Z"/></clipPath></defs><path d="M1 1 L99 2 L98 10 L100 18 L97 31 L3 32 L4 22 L0 12Z" fill="#fcc0c6"/><g stroke="#e68ed0" stroke-width="1.4" fill="none" clip-path="url(#tp3)"><path d="M2 32 Q2 20 10 20 Q18 20 18 32"/><path d="M6 32 Q6 25 10 25 Q14 25 14 32"/><path d="M13 0 L13 8 Q13 20 22 20 Q31 20 31 8 L31 0"/><path d="M18 0 L18 8 Q18 13 22 13 Q26 13 26 8 L26 0"/><path d="M36 32 L36 26 Q36 12 46 12 Q56 12 56 26 L56 32"/><path d="M40 32 L40 26 Q40 17 46 17 Q52 17 52 26 L52 32"/><path d="M44 32 L44 27 Q44 22 46 22 Q48 22 48 27 L48 32"/><path d="M60 0 L60 10 Q60 24 70 24 Q80 24 80 10 L80 0"/><path d="M64 0 L64 10 Q64 19 70 19 Q76 19 76 10 L76 0"/><path d="M68 0 L68 10 Q68 14 70 14 Q72 14 72 10 L72 0"/><path d="M82 32 Q88 18 100 14"/><path d="M86 32 Q92 22 100 19"/><path d="M92 4 Q99 5 98 14"/></g></svg>
<svg class="a" style="left:1349px;top:756px" width="100" height="32" viewBox="0 0 100 32" preserveAspectRatio="none"><defs><clipPath id="tp4"><path d="M1 1 L99 2 L98 10 L100 18 L97 31 L3 32 L4 22 L0 12Z"/></clipPath></defs><path d="M1 1 L99 2 L98 10 L100 18 L97 31 L3 32 L4 22 L0 12Z" fill="#fcc0c6"/><g stroke="#e68ed0" stroke-width="1.4" fill="none" clip-path="url(#tp4)"><path d="M2 32 Q2 20 10 20 Q18 20 18 32"/><path d="M6 32 Q6 25 10 25 Q14 25 14 32"/><path d="M13 0 L13 8 Q13 20 22 20 Q31 20 31 8 L31 0"/><path d="M18 0 L18 8 Q18 13 22 13 Q26 13 26 8 L26 0"/><path d="M36 32 L36 26 Q36 12 46 12 Q56 12 56 26 L56 32"/><path d="M40 32 L40 26 Q40 17 46 17 Q52 17 52 26 L52 32"/><path d="M44 32 L44 27 Q44 22 46 22 Q48 22 48 27 L48 32"/><path d="M60 0 L60 10 Q60 24 70 24 Q80 24 80 10 L80 0"/><path d="M64 0 L64 10 Q64 19 70 19 Q76 19 76 10 L76 0"/><path d="M68 0 L68 10 Q68 14 70 14 Q72 14 72 10 L72 0"/><path d="M82 32 Q88 18 100 14"/><path d="M86 32 Q92 22 100 19"/><path d="M92 4 Q99 5 98 14"/></g></svg>
<div class="a" style="left:438.0px;top:505.50px;width:700px;text-align:center;font-size:31.9px;line-height:1;color:#363434;white-space:nowrap;">Людська гідність</div>
<div class="a" style="left:431.0px;top:579.59px;width:700px;text-align:center;font-size:29.2px;line-height:1;color:#363434;white-space:nowrap;">Пріоритет прав та</div>
<div class="a" style="left:431.0px;top:622.79px;width:700px;text-align:center;font-size:29.2px;line-height:1;color:#363434;white-space:nowrap;">гідності кожної</div>
<div class="a" style="left:431.0px;top:666.29px;width:700px;text-align:center;font-size:29.2px;line-height:1;color:#363434;white-space:nowrap;">людини</div>
<div class="a" style="left:1051.0px;top:505.50px;width:700px;text-align:center;font-size:31.9px;line-height:1;color:#363434;white-space:nowrap;">Рівність</div>
<div class="a" style="left:1051.5px;top:579.59px;width:700px;text-align:center;font-size:29.2px;line-height:1;color:#363434;white-space:nowrap;">Недискримінація та</div>
<div class="a" style="left:1051.5px;top:622.79px;width:700px;text-align:center;font-size:29.2px;line-height:1;color:#363434;white-space:nowrap;">рівні можливості для</div>
<div class="a" style="left:1051.0px;top:666.29px;width:700px;text-align:center;font-size:29.2px;line-height:1;color:#363434;white-space:nowrap;">всіх</div>
<div class="a" style="left:421.0px;top:799.00px;width:700px;text-align:center;font-size:31.9px;line-height:1;color:#363434;white-space:nowrap;">Інклюзивність</div>
<div class="a" style="left:420.5px;top:866.79px;width:700px;text-align:center;font-size:29.2px;line-height:1;color:#363434;white-space:nowrap;">Залучення дітей з</div>
<div class="a" style="left:420.3px;top:909.29px;width:700px;text-align:center;font-size:29.2px;line-height:1;color:#363434;white-space:nowrap;">особливими</div>
<div class="a" style="left:1027.0px;top:799.00px;width:700px;text-align:center;font-size:31.9px;line-height:1;color:#363434;white-space:nowrap;">Доступ до освіти</div>
<div class="a" style="left:1046.4px;top:863.09px;width:700px;text-align:center;font-size:29.2px;line-height:1;color:#363434;white-space:nowrap;">Вільний доступ та</div>
<div class="a" style="left:1046.7px;top:906.09px;width:700px;text-align:center;font-size:29.2px;line-height:1;color:#363434;white-space:nowrap;">простір для</div>
<svg class="a" style="left:350px;top:480px" width="230" height="225" viewBox="0 0 1104 1080">
<g stroke="#141414" stroke-width="19" stroke-linejoin="round">
<path d="M545 420 C 500 320, 330 290, 322 400 C 318 500, 450 620, 560 708 C 680 610, 818 500, 815 375 C 808 270, 640 255, 545 420 Z" fill="#ef5a67"/>
<ellipse cx="550" cy="100" rx="28" ry="62" fill="#ef5a67"/>
<ellipse cx="298" cy="183" rx="28" ry="62" fill="#ef5a67" transform="rotate(-36 298 183)"/>
<ellipse cx="805" cy="183" rx="28" ry="62" fill="#ef5a67" transform="rotate(36 805 183)"/>
<ellipse cx="168" cy="425" rx="62" ry="27" fill="#ef5a67"/>
<ellipse cx="935" cy="425" rx="62" ry="27" fill="#ef5a67"/>
<path d="M 85 522 C 50 530, 55 600, 68 650 C 105 800, 230 890, 535 1030 C 565 960, 562 880, 525 830 C 470 760, 385 680, 330 650 C 285 630, 262 670, 282 720 C 298 760, 330 785, 360 802 C 280 790, 200 740, 160 640 C 140 590, 125 522, 85 522 Z" fill="#fac5a0"/>
<path d="M 85 522 C 50 530, 55 600, 68 650 C 105 800, 230 890, 535 1030 C 565 960, 562 880, 525 830 C 470 760, 385 680, 330 650 C 285 630, 262 670, 282 720 C 298 760, 330 785, 360 802 C 280 790, 200 740, 160 640 C 140 590, 125 522, 85 522 Z" fill="#fac5a0" transform="translate(1110 0) scale(-1 1)"/>
</g></svg>
<svg class="a" style="left:955px;top:470px" width="250" height="235" viewBox="0 0 1149 1080">
<path d="M 810 40 Q 890 100 945 188 L 520 385 L 455 215 Z" fill="#e5b33c"/>
<path d="M 760 330 L 1105 540 Q 1102 650 1030 740 L 690 470 Z" fill="#d98b2e"/>
<path d="M 560 790 L 745 850 L 645 1045 Q 545 1030 465 990 Z" fill="#4f8b8b"/>
<path d="M 88 760 L 300 715 L 345 860 L 150 915 Q 100 850 88 760 Z" fill="#d95e2a"/>
<path d="M 120 183 L 262 280 L 180 470 L 38 355 Q 58 260 120 183 Z" fill="#6f755f"/>
<path d="M 170 320 Q 250 262 385 245 L 470 258 Q 505 330 472 400 Q 420 452 340 470 L 262 552 Q 200 545 178 492 Q 150 420 170 320 Z" fill="#e3aa6d"/>
<path d="M 470 258 L 555 350 L 480 380 Z" fill="#e5b33c"/>
<path d="M 398 212 Q 420 178 482 150 Q 562 128 612 170 L 782 332 L 702 452 Q 602 402 522 392 L 482 322 Q 420 262 398 212 Z" fill="#844a25"/>
<path d="M 690 462 Q 702 380 802 325 Q 882 340 952 402 Q 972 472 942 552 Q 882 642 832 692 L 690 632 Q 670 552 690 462 Z" fill="#f4a475"/>
<path d="M 702 452 L 782 332 L 740 420 L 725 490 Z" fill="#d98b2e" opacity="0.8"/>
<path d="M 270 522 Q 330 452 382 452 Q 472 502 492 642 L 472 842 Q 442 872 402 862 Q 292 842 262 762 Q 242 652 270 522 Z" fill="#c98a52"/>
<path d="M 680 620 L 840 682 L 830 700 L 672 640 Z" fill="#4f8b8b"/>
<path d="M 462 692 Q 562 642 682 642 L 782 652 Q 852 702 832 802 Q 802 882 762 882 Q 602 852 472 842 Q 452 762 462 692 Z" fill="#f2b587"/>
<g stroke="#3a2414" stroke-width="7" fill="none" stroke-linecap="round">
<path d="M245 340 Q200 390 180 450"/><path d="M275 375 Q230 430 205 490"/><path d="M310 410 Q270 460 240 520"/>
<path d="M440 190 Q490 200 520 250"/><path d="M490 160 Q540 175 570 215"/><path d="M545 145 Q580 160 600 185"/>
<path d="M830 345 Q820 380 815 420"/><path d="M870 360 Q860 400 860 440"/><path d="M915 395 Q905 430 905 470"/>
<path d="M300 720 Q300 800 320 850"/><path d="M345 715 Q350 800 375 855"/><path d="M395 710 Q400 800 425 850"/>
<path d="M680 690 Q760 700 820 745"/><path d="M670 745 Q750 760 805 795"/><path d="M655 800 Q730 810 780 840"/>
</g></svg>
<svg class="a" style="left:335px;top:745px" width="240" height="201" viewBox="0 0 1290 1080">
<!-- kid1 green -->
<path d="M60 700 Q70 420 180 350 L330 340 Q400 380 400 520 L390 760 L60 760Z" fill="#7d9a2c"/>
<ellipse cx="250" cy="235" rx="92" ry="95" fill="#f3b592"/>
<path d="M140 210 Q125 95 240 82 Q355 85 345 200 Q330 150 290 150 Q230 160 205 235 Q165 240 140 210Z" fill="#7a4726"/>
<path d="M225 300 L280 300 L280 345 L225 345Z" fill="#f3b592"/>
<path d="M235 320 Q255 335 275 320" stroke="#2a2a3a" stroke-width="10" fill="none"/>
<circle cx="245" cy="222" r="9" fill="#2a2a3a"/><circle cx="305" cy="222" r="9" fill="#2a2a3a"/>
<path d="M255 265 Q275 280 295 265" stroke="#3a2418" stroke-width="6" fill="none"/>
<ellipse cx="225" cy="250" rx="18" ry="12" fill="#f09a80" opacity="0.6"/><ellipse cx="325" cy="250" rx="14" ry="12" fill="#f09a80" opacity="0.6"/>
<!-- kid2 striped -->
<rect x="470" y="630" width="160" height="450" fill="#6b7189"/>
<path d="M380 380 Q420 330 480 325 L620 325 Q680 340 690 420 L680 690 L385 690Z" fill="#f2c232"/>
<rect x="480" y="325" width="140" height="320" fill="#fff"/>
<g fill="#3a68c8"><rect x="480" y="345" width="140" height="17"/><rect x="480" y="385" width="140" height="17"/><rect x="480" y="425" width="140" height="17"/><rect x="480" y="465" width="140" height="17"/><rect x="480" y="505" width="140" height="17"/><rect x="480" y="545" width="140" height="17"/><rect x="480" y="585" width="140" height="17"/></g>
<ellipse cx="520" cy="225" rx="88" ry="95" fill="#cf8a5e"/>
<rect x="490" y="290" width="60" height="40" fill="#cf8a5e"/>
<path d="M500 312 Q525 330 550 312" stroke="#2a2a3a" stroke-width="10" fill="none"/>
<path d="M405 185 Q395 60 510 58 Q560 50 600 80 Q640 110 625 185 Q590 130 520 140 Q460 150 440 225 Q410 225 405 185Z" fill="#28304a"/>
<circle cx="515" cy="212" r="9" fill="#2a2a3a"/><circle cx="575" cy="212" r="9" fill="#2a2a3a"/>
<path d="M520 250 Q545 265 570 250" stroke="#3a2418" stroke-width="6" fill="none"/>
<ellipse cx="490" cy="240" rx="22" ry="14" fill="#f0544a"/><ellipse cx="595" cy="232" rx="18" ry="14" fill="#f0544a"/>
<!-- kid3 girl red dress -->
<path d="M640 430 Q700 390 760 390 L860 400 Q940 450 945 620 L880 640 L640 650Z" fill="#f0a2c4"/>
<path d="M700 410 L860 405 L880 600 L895 900 L590 910 L660 600Z" fill="#e84b37"/>
<path d="M735 395 L790 440 L850 395 L835 380 L750 380Z" fill="#fff"/>
<path d="M690 230 Q680 150 800 150 Q920 150 920 260 Q930 350 900 370 L690 370 Q670 330 690 230Z" fill="#a9623c"/>
<ellipse cx="790" cy="285" rx="85" ry="92" fill="#fcd8c8"/>
<path d="M700 250 Q705 165 800 162 Q885 168 895 255 Q850 215 790 205 Q740 235 700 250Z" fill="#a9623c"/>
<circle cx="760" cy="280" r="9" fill="#2a2a3a"/><circle cx="815" cy="280" r="9" fill="#2a2a3a"/>
<path d="M760 320 Q785 335 810 320" stroke="#3a2418" stroke-width="6" fill="none"/>
<ellipse cx="720" cy="300" rx="18" ry="12" fill="#e890c8" opacity="0.7"/>
<!-- kid5 girl wheelchair left -->
<rect x="175" y="830" width="160" height="250" fill="#9aa0b4"/>
<circle cx="215" cy="1010" r="110" fill="#c8ccd4" stroke="#4a4f62" stroke-width="26"/>
<circle cx="190" cy="1070" r="20" fill="#4a4f62"/>
<rect x="150" y="800" width="420" height="32" rx="16" fill="#4a4f62"/>
<path d="M130 720 Q170 630 270 620 L420 625 Q520 680 590 790 L540 830 L140 830Z" fill="#f0a0c6"/>
<path d="M290 630 L340 690 L380 630Z" fill="#fff"/>
<path d="M320 840 L560 830 Q600 900 590 1080 L330 1080Z" fill="#6a82e8"/>
<path d="M455 850 Q470 950 470 1080" stroke="#5a70d0" stroke-width="8" fill="none"/>
<ellipse cx="325" cy="530" rx="80" ry="88" fill="#f3b592"/>
<path d="M235 510 Q225 410 320 410 Q410 415 405 510 Q370 460 320 470 Q270 480 250 545Z" fill="#a9623c"/>
<circle cx="210" cy="530" r="25" fill="#a9623c"/>
<circle cx="315" cy="520" r="8" fill="#2a2a3a"/><circle cx="370" cy="520" r="8" fill="#2a2a3a"/>
<path d="M320 560 Q345 575 370 560" stroke="#3a2418" stroke-width="6" fill="none"/>
<rect x="300" y="600" width="50" height="25" fill="#f3b592"/>
<ellipse cx="320" cy="795" rx="40" ry="30" fill="#f3b592"/>
<ellipse cx="565" cy="780" rx="35" ry="28" fill="#f3b592"/>
<!-- kid4 boy wheelchair right -->
<rect x="960" y="820" width="180" height="260" fill="#9aa0b4"/>
<circle cx="1100" cy="1010" r="112" fill="#c8ccd4" stroke="#4a4f62" stroke-width="26"/>
<circle cx="1120" cy="1070" r="20" fill="#4a4f62"/>
<rect x="1150" y="640" width="55" height="28" rx="14" fill="#7a8092"/>
<path d="M720 760 Q800 640 960 590 L1080 590 Q1180 640 1190 840 L1000 860 L740 820Z" fill="#f08b12"/>
<path d="M985 585 L1030 625 L1080 585 L1060 570 L1000 570Z" fill="#fff"/>
<rect x="745" y="790" width="420" height="30" rx="15" fill="#7a8092"/>
<path d="M700 860 Q720 830 800 830 L1000 840 Q1000 950 990 1080 L690 1080Z" fill="#8c2b48"/>
<path d="M760 850 L940 850 L930 1080" stroke="#7a2240" stroke-width="6" fill="none"/>
<ellipse cx="1030" cy="465" rx="88" ry="95" fill="#f2a679"/>
<path d="M940 430 Q930 340 1040 340 Q1100 335 1130 320 L1115 360 Q1150 390 1150 430 L1130 480 Q1100 400 1040 400 Q980 400 960 480Z" fill="#9b5a2e"/>
<circle cx="985" cy="460" r="9" fill="#2a2a3a"/><circle cx="1035" cy="460" r="9" fill="#2a2a3a"/>
<path d="M990 505 Q1010 520 1030 505" stroke="#3a2418" stroke-width="6" fill="none"/>
<ellipse cx="960" cy="480" rx="20" ry="14" fill="#f0544a"/><ellipse cx="1055" cy="490" rx="20" ry="14" fill="#f0544a"/>
<rect x="990" y="545" width="50" height="40" fill="#f2a679"/>
<ellipse cx="90" cy="740" rx="45" ry="35" fill="#f3b592"/>
<rect x="45" y="730" width="90" height="20" rx="10" fill="#4a4f62"/>
<ellipse cx="760" cy="780" rx="45" ry="35" fill="#f2a679"/>
<ellipse cx="970" cy="790" rx="40" ry="30" fill="#f2a679"/>
</svg>
<svg class="a" style="left:975px;top:770px" width="240" height="176" viewBox="0 0 1473 1080">
<g stroke="#4e2a3e" stroke-width="10" stroke-linejoin="round">
<path d="M1202 158 A358 358 0 0 1 888 802" stroke="#4e2a3e" stroke-width="56" fill="none" stroke-linecap="round"/>
<path d="M1202 158 A358 358 0 0 1 888 802" stroke="#f07c7c" stroke-width="38" fill="none" stroke-linecap="round"/>
<path d="M1180 150 L1235 170" stroke="#4e2a3e" stroke-width="50" stroke-linecap="round"/>
<path d="M1180 150 L1235 170" stroke="#f07c7c" stroke-width="32" stroke-linecap="round"/>
<rect x="1035" y="840" width="55" height="120" fill="#f07c7c"/>
<ellipse cx="1060" cy="975" rx="140" ry="48" fill="#f07c7c"/>
<path d="M880 820 L940 760" stroke="#4e2a3e" stroke-width="40"/>
<path d="M880 820 L940 760" stroke="#f07c7c" stroke-width="24"/>
<circle cx="1045" cy="480" r="285" fill="#a8d2e2"/>
<path d="M850 340 Q880 260 1000 215 L1090 215 Q1070 280 1000 300 Q960 340 930 380 Q900 420 870 400 Q845 380 850 340Z" fill="#f5c550"/>
<path d="M910 470 Q990 430 1040 530 Q1010 600 950 640 Q930 690 910 700 Q890 600 910 470Z" fill="#f5c550"/>
<path d="M1220 270 Q1290 320 1315 450 Q1330 570 1260 660 Q1200 670 1180 540 Q1175 480 1240 445 Q1200 380 1220 270Z" fill="#f5c550"/>
<g fill="none" stroke-width="7"><path d="M775 420 Q1050 330 1305 410"/><path d="M772 560 Q1050 500 1325 580"/><path d="M1180 210 Q950 470 1010 765"/></g>
<!-- cap -->
<ellipse cx="425" cy="385" rx="160" ry="80" fill="#7585a8"/>
<path d="M80 340 L320 75 L672 162 L432 400 Z" fill="#7a8aaa"/>
<path d="M370 225 Q600 200 690 450" fill="none" stroke="#b8844a" stroke-width="12"/>
<path d="M370 225 Q150 300 220 500 Q300 600 480 670" fill="none" stroke="#b8844a" stroke-width="14"/>
<ellipse cx="370" cy="225" rx="35" ry="25" fill="#f5c550"/>
<path d="M670 420 L700 420 L710 490 L650 490Z" fill="#f5c550"/>
<!-- books -->
<path d="M120 1010 L560 970 L910 1010 L910 1080 L120 1080Z" fill="#a8d2e2"/>
<path d="M110 860 Q110 820 170 830 L560 990 L560 1070 L140 960 Q110 930 110 860Z" fill="#fbf4e0"/>
<path d="M560 990 L890 840 Q920 880 900 930 L560 1070Z" fill="#fbf4e0"/>
<path d="M170 830 L880 810 L560 990 Z" fill="#f5c550"/>
<path d="M140 690 L550 530 L850 680 L450 840Z" fill="#f58282"/>
<path d="M160 700 L450 840 L460 950 L170 820 Q150 760 160 700Z" fill="#fbf4e0"/>
<path d="M450 840 L850 680 L855 860 L460 950Z" fill="#f58282"/>
<path d="M600 780 L610 890 M770 715 L780 830" stroke="#f5c550" stroke-width="14"/>
<g stroke-width="7"><path d="M210 760 L260 780 M300 820 L360 850 M200 900 L260 925 M330 950 L400 975 M680 960 L760 930"/></g>
<path d="M1150 1080 L1300 1010 L1405 1000 L1340 1080Z" fill="#f5c550"/>
</g>
</svg>
</div></div>
<!-- ZOOM TOOLBAR -->
<div class="a" style="left:25px;top:884px;width:40px;height:40px;border-radius:50%;background:#272a2e"></div>
<svg class="a" style="left:35px;top:894px" width="20" height="20" viewBox="0 0 20 20"><path d="M3 15 L3 12 L12.5 2.5 Q13.5 1.5 14.5 2.5 L16.5 4.5 Q17.5 5.5 16.5 6.5 L7 16 L3 16Z M11 4 L15 8" stroke="#1fe58c" stroke-width="1.5" fill="none" stroke-linejoin="round"/><path d="M2 19 L18 19" stroke="#1fe58c" stroke-width="1.5"/></svg>
<svg class="a" style="left:252px;top:921px" width="27" height="12" viewBox="0 0 27 12"><path d="M2 6 L25 6" stroke="#fff" stroke-width="1.6"/><path d="M1 6 L6 1.5 L6 10.5Z M26 6 L21 1.5 L21 10.5Z" fill="#fff"/></svg>
<svg class="a" style="left:48px;top:957px" width="36" height="34" viewBox="0 0 36 34"><path d="M8 12 L8 3 Q8 2 13 2 L13 2 Q23 2 23 8 L23 20 Q23 26 15.5 26 Q8 26 8 20Z" stroke="#fff" stroke-width="1.7" fill="none"/><path d="M4 16 L4 19 Q4 29 15.5 29 Q27 29 27 19 L27 16" stroke="#fff" stroke-width="1.7" fill="none"/><path d="M15.5 29 L15.5 32 M10 32.5 L21 32.5" stroke="#fff" stroke-width="1.7"/><path d="M3.5 31.5 L31 3.5" stroke="#f0195a" stroke-width="3.2" stroke-linecap="round"/></svg>
<svg class="a" style="left:100px;top:970px" width="10" height="7" viewBox="0 0 10 7"><path d="M1 6 L5 2 L9 6" stroke="#fff" stroke-width="1.6" fill="none"/></svg>
<div class="a" style="left:-14.0px;top:996.75px;width:160px;text-align:center;font-size:14px;line-height:1;color:#fff;white-space:nowrap;font-weight:bold;">Звук</div>
<svg class="a" style="left:166px;top:964px" width="33" height="21" viewBox="0 0 33 21"><rect x="1.3" y="1.3" width="20.5" height="18.4" rx="4.5" stroke="#fff" stroke-width="1.7" fill="none"/><path d="M21.8 10.5 L31.2 2.5 L31.2 18.5Z" stroke="#fff" stroke-width="1.7" fill="none" stroke-linejoin="round"/></svg>
<svg class="a" style="left:223px;top:970px" width="10" height="7" viewBox="0 0 10 7"><path d="M1 6 L5 2 L9 6" stroke="#fff" stroke-width="1.6" fill="none"/></svg>
<div class="a" style="left:102.0px;top:996.75px;width:160px;text-align:center;font-size:14px;line-height:1;color:#fff;white-space:nowrap;font-weight:bold;">Видео</div>
<svg class="a" style="left:661px;top:963px" width="26" height="24" viewBox="0 0 26 24"><circle cx="8" cy="4.5" r="3.3" stroke="#fff" stroke-width="1.6" fill="none"/><circle cx="16.5" cy="8.5" r="3.3" stroke="#fff" stroke-width="1.6" fill="none"/><path d="M9 21.5 L4 21.5 Q1.5 21.5 1.5 19 Q1.5 12.5 8 12.5 Q10 12.5 11 13" stroke="#fff" stroke-width="1.6" fill="none"/><path d="M10 20 Q10 15 16.5 15 Q23 15 23 20 Q23 22 21 22 L12 22 Q10 22 10 20Z" stroke="#fff" stroke-width="1.6" fill="none"/></svg>
<div class="a" style="left:695px;top:965px;font-size:13.5px;line-height:1;color:#cfcfcf">18</div>
<svg class="a" style="left:735px;top:970px" width="10" height="7" viewBox="0 0 10 7"><path d="M1 6 L5 2 L9 6" stroke="#fff" stroke-width="1.6" fill="none"/></svg>
<div class="a" style="left:594.0px;top:996.75px;width:160px;text-align:center;font-size:14px;line-height:1;color:#fff;white-space:nowrap;font-weight:bold;">Участники</div>
<svg class="a" style="left:796px;top:959px" width="26" height="30" viewBox="0 0 26 30"><path d="M7 4 Q8 1.5 12 1.5 L20 1.5 Q24 1.5 24.5 5" stroke="#fff" stroke-width="1.6" fill="none"/><path d="M6 9 L18 9 Q23 9 23 14 L23 19 Q23 24 18 24 L10 24 L6 28 L6 24 Q1.5 23.5 1.5 19 L1.5 14 Q1.5 9 6 9Z" stroke="#fff" stroke-width="1.6" fill="none"/><circle cx="7.5" cy="16.5" r="1.3" fill="#fff"/><circle cx="12.2" cy="16.5" r="1.3" fill="#fff"/><circle cx="17" cy="16.5" r="1.3" fill="#fff"/></svg>
<div class="a" style="left:816px;top:955px;width:21px;height:21px;border-radius:50%;background:#ec3c44;border:1.5px solid #000;color:#fff;font-size:12.5px;font-weight:bold;line-height:18px;text-align:center">1</div>
<svg class="a" style="left:848px;top:970px" width="10" height="7" viewBox="0 0 10 7"><path d="M1 6 L5 2 L9 6" stroke="#fff" stroke-width="1.6" fill="none"/></svg>
<div class="a" style="left:732.0px;top:996.75px;width:160px;text-align:center;font-size:14px;line-height:1;color:#fff;white-space:nowrap;font-weight:bold;">Чат</div>
<svg class="a" style="left:914px;top:960px" width="34" height="28" viewBox="0 0 34 28"><path d="M8 25.5 Q2 17 2 10 Q2.5 2 10 2 Q15 2.5 17.5 8 Q21 4.5 26 5 Q32 6 32 12.5 Q31.5 19 8 25.5Z" stroke="#fff" stroke-width="1.7" fill="none" stroke-linejoin="round"/></svg>
<svg class="a" style="left:973px;top:970px" width="10" height="7" viewBox="0 0 10 7"><path d="M1 6 L5 2 L9 6" stroke="#fff" stroke-width="1.6" fill="none"/></svg>
<div class="a" style="left:851.0px;top:996.75px;width:160px;text-align:center;font-size:14px;line-height:1;color:#fff;white-space:nowrap;font-weight:bold;">Отреагировать</div>
<div class="a" style="left:1040px;top:962px;width:30px;height:24px;border-radius:4px;background:#0beb8a"></div>
<svg class="a" style="left:1047px;top:965px" width="16" height="18" viewBox="0 0 16 18"><path d="M8 2 L14 8 L10 8 L10 15 L6 15 L6 8 L2 8Z" fill="#000"/></svg>
<div class="a" style="left:975.5px;top:996.75px;width:160px;text-align:center;font-size:14px;line-height:1;color:#fff;white-space:nowrap;font-weight:bold;">Поделиться</div>
<svg class="a" style="left:1159px;top:960px" width="28" height="28" viewBox="0 0 28 28"><path d="M1.5 10 L1.5 6 Q1.5 1.5 6 1.5 L9.5 1.5" stroke="#fff" stroke-width="1.7" fill="none"/><path d="M26 17 L26 21 Q26 26 21 26 L17.5 26" stroke="#fff" stroke-width="1.7" fill="none"/><circle cx="20.5" cy="7" r="5" stroke="#fff" stroke-width="1.7" fill="none"/><circle cx="6.5" cy="21" r="5" stroke="#fff" stroke-width="1.7" fill="none"/></svg>
<div class="a" style="left:1093.0px;top:996.75px;width:160px;text-align:center;font-size:14px;line-height:1;color:#fff;white-space:nowrap;font-weight:bold;">Приложения</div>
<svg class="a" style="left:1264px;top:959px" width="30" height="30" viewBox="0 0 30 30"><circle cx="15" cy="15" r="13.3" stroke="#fff" stroke-width="1.8" fill="none"/><circle cx="15" cy="15" r="5.8" fill="#fff"/></svg>
<div class="a" style="left:1198.6px;top:996.75px;width:160px;text-align:center;font-size:14px;line-height:1;color:#fff;white-space:nowrap;font-weight:bold;">Запись</div>
<svg class="a" style="left:1378px;top:958px" width="32" height="32" viewBox="0 0 32 32"><circle cx="16" cy="16" r="14.5" stroke="#fff" stroke-width="1.8" fill="none"/><circle cx="9.5" cy="16" r="1.7" fill="#fff"/><circle cx="16" cy="16" r="1.7" fill="#fff"/><circle cx="22.5" cy="16" r="1.7" fill="#fff"/></svg>
<div class="a" style="left:1313.8px;top:996.75px;width:160px;text-align:center;font-size:14px;line-height:1;color:#fff;white-space:nowrap;font-weight:bold;">Дополнительно</div>
<svg class="a" style="left:1844px;top:957px" width="32" height="33" viewBox="0 0 32 33"><path d="M18.5 21 L18.5 5 L29 1.5 L29 27.5 L18.5 31.5" stroke="#f0195a" stroke-width="1.8" fill="none" stroke-linejoin="round"/><path d="M20 1.8 L29 1.8" stroke="#f0195a" stroke-width="1.8"/><circle cx="10" cy="6.5" r="3.3" stroke="#fff" stroke-width="1.6" fill="none"/><path d="M6 12 Q10 10 13 12 L15 18 L19 20 M8 12 L4 17 L2 21 M9 14 L8 22 L3 31 L6 32 L11 24 L14 31 L17 30 L13 20" stroke="#fff" stroke-width="1.6" fill="none" stroke-linejoin="round" stroke-linecap="round"/></svg>
<div class="a" style="left:1779.0px;top:996.75px;width:160px;text-align:center;font-size:14px;line-height:1;color:#fff;white-space:nowrap;font-weight:bold;">Выйти</div>
<!-- TASKBAR -->
<svg class="a" style="left:26px;top:1034px" width="32" height="32" viewBox="0 0 32 32"><defs><linearGradient id="sun" x1="0" y1="0" x2="0" y2="1"><stop offset="0" stop-color="#ffc21a"/><stop offset="1" stop-color="#f08a10"/></linearGradient><linearGradient id="cld" x1="0" y1="0" x2="0" y2="1"><stop offset="0" stop-color="#f4f8ff"/><stop offset="1" stop-color="#a8c4e8"/></linearGradient></defs><circle cx="14" cy="13" r="11" fill="url(#sun)"/><path d="M6 30 Q1 30 1 25.5 Q1 21 6 21 Q7 15.5 13 15.5 Q18 15.5 20 19 Q26 18.5 27.5 23 Q31 23.5 31 26.5 Q31 30 27 30Z" fill="url(#cld)"/></svg>
<div class="a" style="left:64px;top:1033px;font-size:14px;line-height:1;color:#fff">15°C</div>
<div class="a" style="left:64px;top:1052px;font-size:14.7px;line-height:1;color:#dfe3e8">Partly sunny</div>
<svg class="a" style="left:585px;top:1036px" width="30" height="30" viewBox="0 0 30 30"><defs><linearGradient id="win" x1="0" y1="0" x2="1" y2="1"><stop offset="0" stop-color="#7ee0ff"/><stop offset="1" stop-color="#1fa2e8"/></linearGradient></defs><rect x="0" y="0" width="14" height="14" rx="1" fill="url(#win)"/><rect x="15.5" y="0" width="14" height="14" rx="1" fill="url(#win)"/><rect x="0" y="15.5" width="14" height="14" rx="1" fill="url(#win)"/><rect x="15.5" y="15.5" width="14" height="14" rx="1" fill="url(#win)"/></svg>
<div class="a" style="left:632px;top:1031px;width:273px;height:38px;border-radius:19px;background:#f0f2f4"></div>
<svg class="a" style="left:644px;top:1039px" width="22" height="22" viewBox="0 0 22 22"><circle cx="9" cy="9" r="7" stroke="#1c1c1c" stroke-width="2.2" fill="none"/><path d="M14 14 L20 20" stroke="#1c1c1c" stroke-width="2.4" stroke-linecap="round"/></svg>
<div class="a" style="left:677px;top:1041px;font-size:17.7px;line-height:1;color:#5a5a5a">Поиск</div>
<svg class="a" style="left:838px;top:1032px" width="64" height="36" viewBox="0 0 64 36"><path d="M4 20 Q6 6 20 4 Q40 0 58 6 Q64 14 60 28 Q50 34 20 33 Q6 32 4 20Z" fill="#1a2a6a"/><path d="M6 22 L58 20 L52 30 L12 31Z" fill="#e8eef8"/><path d="M8 29 L54 28 L50 32 L14 33Z" fill="#c02a2a"/><rect x="22" y="10" width="5" height="10" fill="#e8a838"/><rect x="32" y="9" width="5" height="11" fill="#e8a838"/><rect x="42" y="11" width="5" height="9" fill="#e8a838"/><circle cx="12" cy="10" r="1" fill="#fff"/><circle cx="54" cy="12" r="1" fill="#fff"/></svg>
<svg class="a" style="left:920px;top:1035px" width="32" height="32" viewBox="0 0 32 32"><path d="M1 5 Q1 3 3 3 L12 3 L15 6 L29 6 Q31 6 31 8 L31 12 L1 12Z" fill="#e8a800"/><path d="M1 10 L31 10 L31 28 Q31 30 29 30 L3 30 Q1 30 1 28Z" fill="#ffc928"/><rect x="10" y="20" width="12" height="4" rx="1" fill="#1f6fd0"/></svg>
<svg class="a" style="left:976px;top:1036px" width="30" height="30" viewBox="0 0 30 30"><rect x="8" y="2" width="21" height="26" rx="2" fill="#fff"/><rect x="12" y="7" width="13" height="2" fill="#2b5fb8"/><rect x="12" y="12" width="13" height="2" fill="#2b5fb8"/><rect x="12" y="17" width="13" height="2" fill="#2b5fb8"/><rect x="12" y="22" width="13" height="2" fill="#2b5fb8"/><rect x="1" y="6" width="17" height="18" rx="2" fill="#1e58b8"/><text x="9.5" y="20.5" font-family="Liberation Sans" font-weight="bold" font-size="12" fill="#fff" text-anchor="middle">W</text></svg>
<div class="a" style="left:1022px;top:1025px;width:49px;height:50px;border-radius:5px;background:#253648;border:1px solid #34465a"></div>
<div class="a" style="left:1030px;top:1036px;width:33px;height:30px;border-radius:9px;background:#1869e8"></div>
<div class="a" style="left:1034px;top:1046px;font-size:8px;font-weight:bold;line-height:1;color:#fff">zoom</div>
<div class="a" style="left:1046px;top:1030px;width:19px;height:20px;border-radius:4px;background:#e8333a;color:#fff;font-size:13px;line-height:20px;text-align:center">2</div>
<div class="a" style="left:1037px;top:1069px;width:19px;height:3px;border-radius:2px;background:#5cc4f8"></div>
<svg class="a" style="left:1085px;top:1035px" width="32" height="32" viewBox="0 0 32 32"><path d="M3 29 L5 22 Q2 16 4.5 10.5 Q9 2 17 2.5 Q27 3.5 29.5 13 Q31 23 22 28 Q15 31 9 27.5Z" fill="#25c25a"/><path d="M5.5 26.5 L7 21.5 Q4.5 16.5 7 11.5 Q10.5 5 17 5 Q25 5.5 27 13 Q28 21.5 21 25.5 Q15 28 10 25Z" fill="#1a2a3a"/><path d="M11 10 Q13 9 14 11 L15 14 Q14 16 13.5 16.5 Q16 20.5 19 21 Q20 20 21 19.5 L24 21 Q24 23.5 21.5 24 Q16 24 12 19 Q9 14 11 10Z" fill="#25c25a"/></svg>
<div class="a" style="left:1101px;top:1029px;width:22px;height:22px;border-radius:50%;background:#4a9ef0;border:2px solid #152a3c;color:#0a1828;font-size:12px;line-height:18px;text-align:center">4</div>
<svg class="a" style="left:1140px;top:1036px" width="32" height="32" viewBox="0 0 32 32"><circle cx="16" cy="16" r="15" fill="#2aa4e0"/><path d="M7 15.5 L23 9 Q24.5 8.5 24 10.5 L21.5 22 Q21 23.5 19.5 22.5 L15 19 L13 21 L13.5 17 L21 10.5 L11.5 16.5 L7.5 15.5Z" fill="#fff"/></svg>
<div class="a" style="left:1154px;top:1029px;width:27px;height:21px;border-radius:11px;background:#e8333a;border:1.5px solid #152a3c;color:#fff;font-size:12.5px;line-height:18px;text-align:center">32</div>
<svg class="a" style="left:1195px;top:1035px" width="32" height="32" viewBox="0 0 32 32"><path d="M16 1 A15 15 0 0 1 29 8.5 L16 8.5 A7.5 7.5 0 0 0 9.5 12.2 L3 1.5 Z" fill="#ea4335"/><path d="M16 1 A15 15 0 0 1 29 8.5 L16 8.5 A7.5 7.5 0 0 0 9.5 12.2 L3.5 5.5 A15 15 0 0 1 16 1Z" fill="#ea4335"/><path d="M29 8.5 A15 15 0 0 1 16 31 L22.5 19.8 A7.5 7.5 0 0 0 16 8.5Z" fill="#fbc02d"/><path d="M16 31 A15 15 0 0 1 3.5 5.5 L9.5 12.2 A7.5 7.5 0 0 0 22.5 19.8Z" fill="#34a853"/><circle cx="16" cy="16" r="6.5" fill="#fff"/><circle cx="16" cy="16" r="5" fill="#4285f4"/></svg>
<div class="a" style="left:1213px;top:1029px;width:18px;height:18px;border-radius:50%;background:radial-gradient(circle at 50% 40%,#f0e0a0 0,#5a78c0 55%,#2a3a68 100%);border:1.5px solid #d8b858"></div>
<svg class="a" style="left:1250px;top:1036px" width="32" height="30" viewBox="0 0 32 30"><rect x="9" y="2" width="21" height="26" rx="2" fill="#fff"/><g stroke="#1e7a44" stroke-width="1.6"><path d="M13 7 L26 7 M13 12 L26 12 M13 17 L26 17 M13 22 L26 22 M19 4 L19 26"/></g><rect x="1" y="6" width="17" height="18" rx="2" fill="#107c41"/><text x="9.5" y="20.5" font-family="Liberation Sans" font-weight="bold" font-size="12" fill="#fff" text-anchor="middle">X</text></svg>
<svg class="a" style="left:1305px;top:1035px" width="32" height="32" viewBox="0 0 32 32"><defs><linearGradient id="ed1" x1="0" y1="0" x2="1" y2="1"><stop offset="0" stop-color="#3ccbf4"/><stop offset="1" stop-color="#1a8ad8"/></linearGradient><linearGradient id="ed2" x1="0" y1="0" x2="1" y2="0"><stop offset="0" stop-color="#0c59a4"/><stop offset="1" stop-color="#1a7ad0"/></linearGradient></defs><path d="M16 1 Q29 1 31 14 Q31 20 25 20 L12 20 Q12 26 20 27 Q24 27 28 25 Q23 31 15 31 Q3 30 1 18 Q1 6 16 1Z" fill="url(#ed1)"/><path d="M1 18 Q3 30 15 31 Q8 28 8 20 Q8 13 16 12 Q22 12 24 17 Q24 8 15 7 Q5 8 1 18Z" fill="url(#ed2)"/><path d="M16 1 Q29 1 31 14 Q31 20 25 20 L20 20 Q22 14 18 10 Q10 5 3 10 Q6 2 16 1Z" fill="#5fe07a" opacity="0.55"/></svg>
<div class="a" style="left:932px;top:1069px;width:8px;height:3px;border-radius:2px;background:#8a96a4"></div>
<div class="a" style="left:987px;top:1069px;width:8px;height:3px;border-radius:2px;background:#8a96a4"></div>
<div class="a" style="left:1097px;top:1069px;width:8px;height:3px;border-radius:2px;background:#8a96a4"></div>
<div class="a" style="left:1152px;top:1069px;width:8px;height:3px;border-radius:2px;background:#8a96a4"></div>
<div class="a" style="left:1207px;top:1069px;width:8px;height:3px;border-radius:2px;background:#8a96a4"></div>
<div class="a" style="left:1262px;top:1069px;width:8px;height:3px;border-radius:2px;background:#8a96a4"></div>
<div class="a" style="left:1317px;top:1069px;width:8px;height:3px;border-radius:2px;background:#8a96a4"></div>
<svg class="a" style="left:1561px;top:1043px" width="16" height="11" viewBox="0 0 16 11"><path d="M1.5 9.5 L8 3 L14.5 9.5" stroke="#fff" stroke-width="1.8" fill="none"/></svg>
<svg class="a" style="left:1595px;top:1038px" width="29" height="24" viewBox="0 0 29 24"><rect x="3" y="1" width="5.5" height="10" rx="2.75" stroke="#6cd2f2" stroke-width="1.5" fill="none"/><path d="M1 8 Q1 14 5.75 14 Q10.5 14 10.5 8 M5.75 14 L5.75 17" stroke="#6cd2f2" stroke-width="1.5" fill="none"/><path d="M27 7 L13 13 L19 15 L20.5 21.5Z" stroke="#6cd2f2" stroke-width="1.5" fill="none" stroke-linejoin="round"/></svg>
<div class="a" style="left:1644px;top:1044px;font-size:13.8px;line-height:1;color:#fff">УКР</div>
<svg class="a" style="left:1693px;top:1041px" width="22" height="17" viewBox="0 0 22 17"><path d="M1.5 6 Q11 -2 20.5 6" stroke="#fff" stroke-width="1.6" fill="none"/><path d="M4.5 9 Q11 3.5 17.5 9" stroke="#fff" stroke-width="1.6" fill="none"/><path d="M7.5 12 Q11 9 14.5 12" stroke="#fff" stroke-width="1.6" fill="none"/><circle cx="11" cy="15" r="1.5" fill="#fff"/></svg>
<svg class="a" style="left:1723px;top:1040px" width="22" height="19" viewBox="0 0 22 19"><path d="M1.5 6.5 L5 6.5 L10 2 L10 17 L5 12.5 L1.5 12.5Z" stroke="#fff" stroke-width="1.5" fill="none" stroke-linejoin="round"/><path d="M13 6.5 Q15 9.5 13 12.5" stroke="#fff" stroke-width="1.5" fill="none"/><path d="M16 4.5 Q19 9.5 16 14.5" stroke="#fff" stroke-width="1.5" fill="none"/><path d="M19 2.5 Q23 9.5 19 16.5" stroke="#8a96a4" stroke-width="1.3" fill="none"/></svg>
<svg class="a" style="left:1752px;top:1039px" width="23" height="20" viewBox="0 0 23 20"><rect x="1.5" y="6" width="17" height="11" rx="2" stroke="#fff" stroke-width="1.5" fill="none"/><rect x="19" y="9" width="2.5" height="5" fill="#fff"/><rect x="3.5" y="8" width="13" height="7" fill="#fff"/><path d="M6 1 L3.5 6 L6.5 6 L5 9" stroke="#fff" stroke-width="1.3" fill="none"/></svg>
<div class="a" style="left:1789px;top:1033px;width:77px;text-align:right;font-size:14px;line-height:1;color:#fff">12:48</div>
<div class="a" style="left:1789px;top:1053px;width:77px;text-align:right;font-size:14px;line-height:1;color:#fff">24.10.2025</div>
<svg class="a" style="left:1876px;top:1040px" width="20" height="22" viewBox="0 0 20 22"><path d="M3 16 L3 10 Q3 4 9 4 Q15 4 15 10 L15 16 L17 18 L1 18Z" fill="#fff"/><circle cx="9" cy="20" r="2" fill="#fff"/><text x="9" y="15" font-family="Liberation Sans" font-weight="bold" font-size="8" fill="#152a3c" text-anchor="middle">z</text><text x="16" y="7" font-family="Liberation Sans" font-weight="bold" font-size="8" fill="#fff" text-anchor="middle">z</text></svg>
</body></html>
